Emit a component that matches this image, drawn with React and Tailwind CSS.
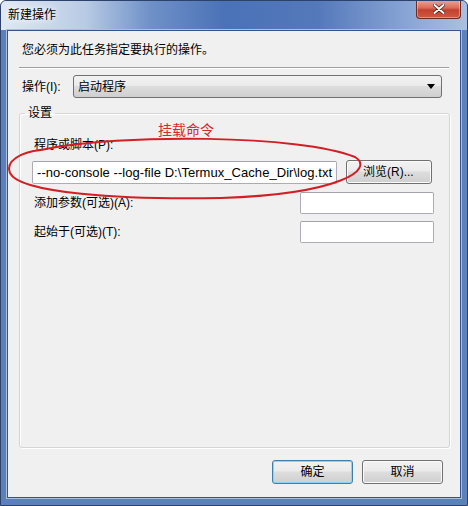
const font = { fontFamily: '"Liberation Sans", "Noto Sans CJK SC", sans-serif' };

function TextBox({ className = '', children }) {
  return (
    <div className={`bg-white border border-[#abadb3] border-t-[#a0a3aa] rounded-[2px] flex items-center ${className}`}>
      {children}
    </div>
  );
}

function WinButton({ label, primary }) {
  return (
    <button
      className={`w-[81px] h-[24px] rounded-[3px] border text-[12px] text-black bg-[linear-gradient(#f2f2f2_0%,#ebebeb_45%,#dddddd_50%,#cfcfcf_100%)] ${
        primary ? 'border-[#3c7fb1] shadow-[inset_0_0_0_1px_#8ed3f5]' : 'border-[#707070] shadow-[inset_0_0_0_1px_#fbfbfb]'
      }`}
    >
      {label}
    </button>
  );
}

export default function App() {
  return (
    <div
      className="relative w-[468px] h-[506px] overflow-hidden bg-[#5b80bb] border border-[#2c426b] rounded-t-[6px] flex flex-col"
      style={font}
    >
      {/* title bar */}
      <div className="h-[29px] shrink-0 flex items-start bg-[linear-gradient(90deg,#dfe8f3_0%,#b9cbe5_18%,#6f91c8_32%,#4a72b6_48%,#5479bb_68%,#8aa7d6_88%,#a9c0e3_100%)]">
        <span className="ml-[7px] mt-[7px] text-[12px] leading-[14px] text-black [text-shadow:0_0_6px_#fff,0_0_10px_#fff]">
          新建操作
        </span>
        <div className="ml-auto mr-[6px] w-[45px] h-[19px] -mt-px rounded-b-[4px] border border-[#6b2a22] border-t-0 bg-[linear-gradient(#e9a99c_0%,#d86a58_45%,#c2412f_55%,#cf5a43_100%)] flex items-center justify-center shadow-[inset_0_0_0_1px_rgba(255,255,255,0.35)]">
          <svg width="12" height="10" viewBox="0 0 12 10">
            <path d="M1.5 1 L10.5 9 M10.5 1 L1.5 9" stroke="#4a1a14" strokeWidth="3.4" strokeLinecap="round" />
            <path d="M1.5 1 L10.5 9 M10.5 1 L1.5 9" stroke="#ffffff" strokeWidth="2" strokeLinecap="round" />
          </svg>
        </div>
      </div>

      {/* client area */}
      <div className="mx-[6px] mb-[7px] flex-1 bg-[#f0f0f0] border border-[#34548a] shadow-[0_0_0_1px_#a9bfe0] pt-[12px] px-[11px] flex flex-col text-[12px] leading-[14px] text-black">
        <p className="pl-[3px]">您必须为此任务指定要执行的操作。</p>
        <div className="mt-[10px] border-t border-[#a0a0a0] border-b border-b-white" />

        <div className="mt-[6px] flex items-center h-[23px]">
          <span className="w-[54px] pl-[3px] shrink-0">操作(I):</span>
          <div className="flex-1 mr-[7px] h-[23px] rounded-[3px] border border-[#707070] bg-[linear-gradient(#f2f2f2_0%,#ebebeb_45%,#dddddd_50%,#cfcfcf_100%)] flex items-center px-[4px]">
            <span>启动程序</span>
            <svg className="ml-auto mr-[2px]" width="8" height="5" viewBox="0 0 8 5">
              <path d="M0 0 H8 L4 5 Z" fill="#000" />
            </svg>
          </div>
        </div>

        <fieldset className="mt-[8px] mr-[-1px] h-[342px] border border-[#d5d5d5] rounded-[3px] px-[12px] shadow-[inset_1px_1px_0_#fff,1px_1px_0_#fff] flex flex-col">
          <legend className="-ml-[7px] px-[3px]">设置</legend>
          <span className="mt-[18px] pl-[2px]">程序或脚本(P):</span>
          <div className="mt-[8px] flex items-center">
            <TextBox className="w-[305px] h-[23px] pl-[4px] overflow-hidden">
              <span className="text-[13px] leading-[15px] tracking-[0.05px] text-black whitespace-nowrap">
                --no-console --log-file D:\Termux_Cache_Dir\log.txt
              </span>
            </TextBox>
            <button className="ml-[9px] w-[86px] h-[24px] rounded-[3px] border border-[#707070] shadow-[inset_0_0_0_1px_#fbfbfb] bg-[linear-gradient(#f2f2f2_0%,#ebebeb_45%,#dddddd_50%,#cfcfcf_100%)] text-[12px] text-left pl-[16px]">
              浏览(R)...
            </button>
          </div>
          <div className="mt-[8px] mr-[3px] flex items-center justify-between">
            <span className="pl-[2px]">添加参数(可选)(A):</span>
            <TextBox className="w-[134px] h-[22px]" />
          </div>
          <div className="mt-[7px] mr-[3px] flex items-center justify-between">
            <span className="pl-[2px]">起始于(可选)(T):</span>
            <TextBox className="w-[134px] h-[22px]" />
          </div>
        </fieldset>

        <div className="mt-[12px] flex justify-end gap-[9px] pr-[6px]">
          <WinButton label="确定" primary />
          <WinButton label="取消" />
        </div>
      </div>

      {/* red annotation */}
      <span className="absolute left-[157px] top-[119px] text-[14px] leading-[18px] text-[#d42a2a]" style={{ fontFamily: '"Noto Sans CJK SC", sans-serif' }}>
        挂载命令
      </span>
      <svg className="absolute left-0 top-0 pointer-events-none" width="468" height="506" viewBox="0 0 468 506">
        <path
          d="M 40 149 C 120 132, 300 134, 354 156 C 374 168, 340 193, 220 197 C 120 199, 18 192, 9 172 C 4 160, 20 151, 40 149 Z"
          fill="none"
          stroke="#d21f26"
          strokeWidth="2"
        />
      </svg>
    </div>
  );
}
